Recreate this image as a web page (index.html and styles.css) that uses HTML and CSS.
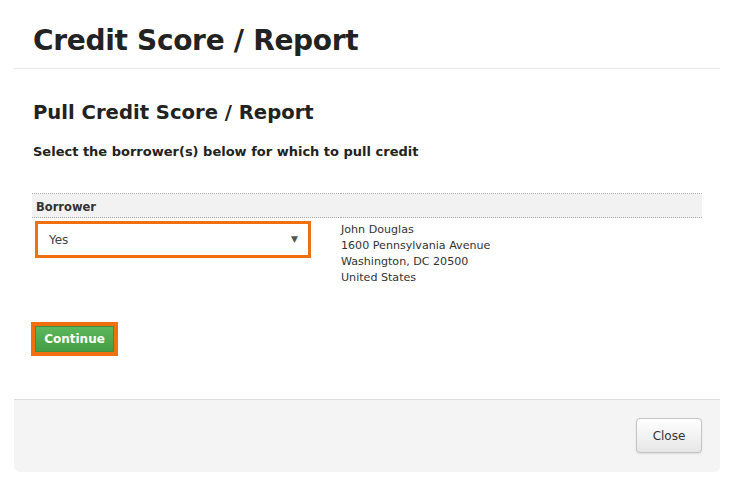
FILE: index.html
```html
<!DOCTYPE html>
<html lang="en">
<head>
  <meta charset="UTF-8">
  <title>Credit Score / Report</title>
  <link rel="stylesheet" href="styles.css">
</head>
<body>
  <div class="modal">
    <div class="modal-header">
      <h1>Credit Score / Report</h1>
    </div>

    <div class="modal-body">
      <h2>Pull Credit Score / Report</h2>
      <p class="lead">Select the borrower(s) below for which to pull credit</p>

      <table class="borrowers">
        <thead>
          <tr><th colspan="2">Borrower</th></tr>
        </thead>
        <tbody>
          <tr>
            <td class="pick">
              <div class="select-wrap">
                <select>
                  <option>Yes</option>
                  <option>No</option>
                </select>
                <span class="arrow">&#9660;</span>
              </div>
            </td>
            <td class="address">
              John Douglas<br>
              1600 Pennsylvania Avenue<br>
              Washington, DC 20500<br>
              United States
            </td>
          </tr>
        </tbody>
      </table>

      <div class="actions">
        <button class="btn-continue">Continue</button>
      </div>
    </div>

    <div class="modal-footer">
      <button class="btn-close">Close</button>
    </div>
  </div>
</body>
</html>
```

FILE: styles.css
```css
* {
  margin: 0;
  padding: 0;
  box-sizing: border-box;
}
body {
  font-family: "DejaVu Sans", Verdana, sans-serif;
  background: #fff;
  color: #222;
}
.modal {
  width: 706px;
  margin-left: 14px;
}
.modal-header {
  padding: 23px 19px 0;
  height: 69px;
  border-bottom: 1px solid #e8e8e8;
}
h1 {
  font-size: 28px;
  font-weight: bold;
  line-height: 36px;
  letter-spacing: -0.3px;
  color: #222;
}
.modal-body {
  padding: 31px 18px 0 19px;
  height: 330px;
}
h2 {
  font-size: 19.6px;
  font-weight: bold;
  line-height: 26px;
  color: #222;
}
.lead {
  margin-top: 17px;
  font-size: 13px;
  font-weight: bold;
  line-height: 18px;
  color: #222;
}
.borrowers {
  margin-top: 32px;
  margin-left: -1px;
  width: 670px;
  border-collapse: collapse;
}
.borrowers th {
  text-align: left;
  font-size: 11.5px;
  font-weight: bold;
  color: #333;
  background: #f2f2f2;
  border-top: 1px dotted #aaa;
  border-bottom: 1px dotted #aaa;
  padding: 4px 4px 1px;
  height: 24px;
}
.borrowers td {
  vertical-align: top;
}
.pick {
  width: 309px;
  padding: 3px 0 0 3px;
}
.select-wrap {
  position: relative;
  width: 276px;
  height: 37px;
  border: 3px solid #f07010;
  background: #fff;
}
.select-wrap select {
  appearance: none;
  -webkit-appearance: none;
  width: 100%;
  height: 100%;
  border: none;
  background: transparent;
  font-family: "DejaVu Sans", Verdana, sans-serif;
  font-size: 12px;
  color: #444;
  padding-left: 11px;
  outline: none;
}
.arrow {
  position: absolute;
  right: 10px;
  top: 10px;
  font-size: 9px;
  color: #555;
  pointer-events: none;
}
.address {
  padding: 4px 0 0 0;
  font-size: 11.1px;
  line-height: 16px;
  color: #333;
}
.actions {
  margin-top: 36px;
  margin-left: -2px;
}
.btn-continue {
  background: #4cae4c;
  background-image: linear-gradient(#5cb85c, #449d44);
  color: #fff;
  font-family: "DejaVu Sans", Verdana, sans-serif;
  font-weight: bold;
  font-size: 12px;
  border: 1px solid #3f8f3f;
  outline: 4px solid #f07010;
  outline-offset: 0;
  margin-left: 4px;
  margin-top: 4px;
  width: 79px;
  height: 26px;
  cursor: pointer;
}
.modal-footer {
  display: flex;
  justify-content: flex-end;
  align-items: flex-start;
  height: 73px;
  padding: 18px 18px 0 0;
  background: #f4f4f4;
  border-top: 1px solid #dcdcdc;
  border-radius: 0 0 6px 6px;
}
.btn-close {
  width: 66px;
  height: 35px;
  font-family: "DejaVu Sans", Verdana, sans-serif;
  font-size: 12px;
  color: #333;
  background-image: linear-gradient(#ffffff, #e6e6e6);
  border: 1px solid #c4c4c4;
  border-radius: 4px;
  box-shadow: 0 1px 2px rgba(0, 0, 0, 0.1);
  cursor: pointer;
}
```
